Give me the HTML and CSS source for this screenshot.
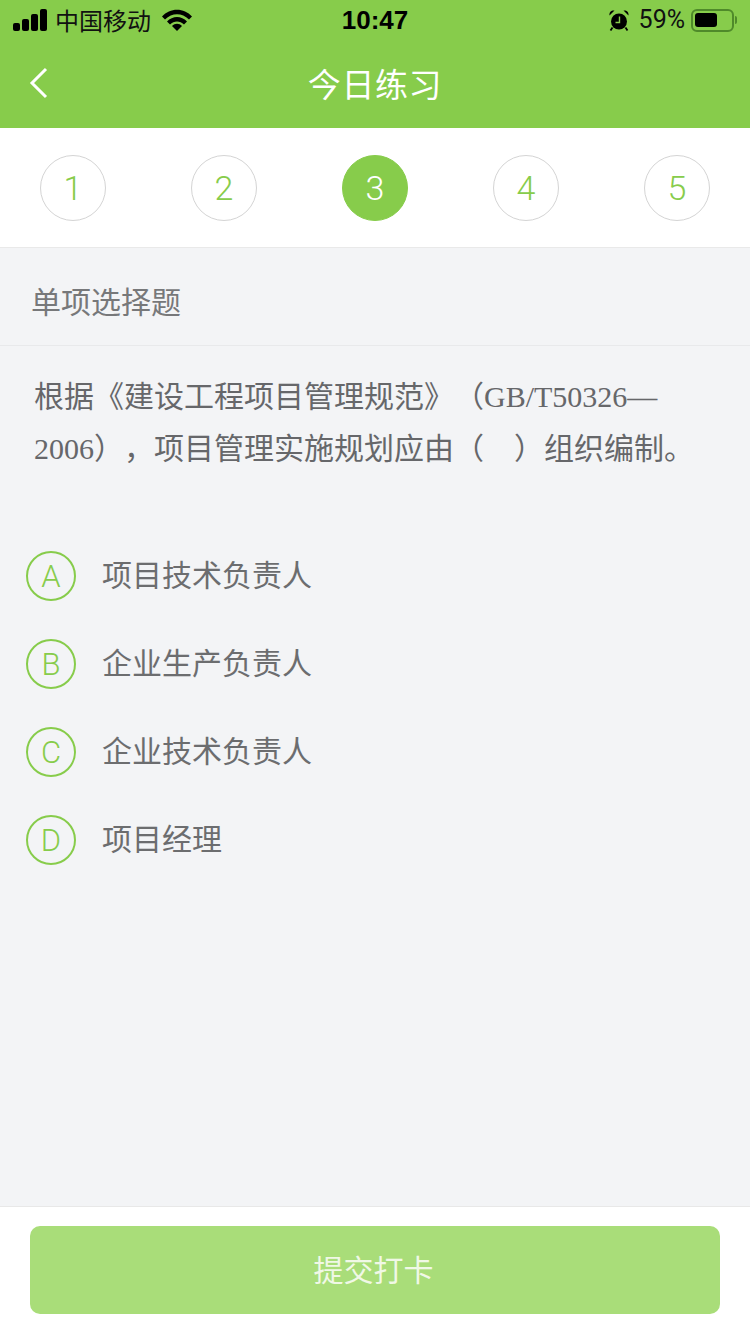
FILE: index.html
```html
<!DOCTYPE html>
<html lang="zh-CN">
<head>
    <meta charset="UTF-8">
    <meta name="viewport" content="width=device-width, initial-scale=1.0">
    <title>今日练习</title>
    <link rel="stylesheet" href="styles.css">
</head>
<body>
    <div class="page">
        <!-- Green header with the status bar -->
        <header class="header">
            <div class="status-bar">
                <div class="status-left">
                    <svg class="signal" width="34" height="22" viewBox="0 0 34 22">
                        <rect x="0" y="14" width="7" height="8" rx="2"/>
                        <rect x="9" y="10" width="7" height="12" rx="2"/>
                        <rect x="18" y="5" width="7" height="17" rx="2"/>
                        <rect x="27" y="0" width="7" height="22" rx="2"/>
                    </svg>
                    <span class="carrier">中国移动</span>
                    <svg class="wifi" width="30" height="22" viewBox="0 0 30 22">
                        <path d="M0 7.500C8 -1.500 22 -1.500 30 7.500L27 10.500C20 3.500 10 3.500 3 10.500Z"/>
                        <path d="M5 12.500C10.500 6.500 19.500 6.500 25 12.500L22 15.500C18 11.500 12 11.500 8 15.500Z"/>
                        <path d="M10 17C13 14 17 14 20 17L15 22Z"/>
                    </svg>
                </div>
                <span class="time">10:47</span>
                <div class="status-right">
                    <svg class="alarm" width="20" height="21" viewBox="0 0 20 21">
                        <circle cx="10" cy="11.500" r="8"/>
                        <path d="M.5 5.500C0 2 2.500 0 5.500 .5ZM19.500 5.500C20 2 17.500 0 14.500 .5Z"/>
                        <path d="M3.500 17.500L1.500 20.500M16.500 17.500L18.500 20.500" stroke="#000" stroke-width="1.800"/>
                        <path d="M10.500 6.500V12.500H6.500" fill="none" stroke="#87cc4b" stroke-width="1.400"/>
                    </svg>
                    <span class="battery-text">59%</span>
                    <div class="battery">
                        <div class="battery-level"></div>
                    </div>
                    <div class="battery-cap"></div>
                </div>
            </div>
            <div class="nav-bar">
                <svg class="back" width="20" height="32" viewBox="0 0 20 32">
                    <path d="M17 2L3 16L17 30" fill="none" stroke="#fff" stroke-width="3"/>
                </svg>
                <h1>今日练习</h1>
            </div>
        </header>

        <!-- Question numbers -->
        <div class="steps">
            <div class="step">1</div>
            <div class="step">2</div>
            <div class="step active">3</div>
            <div class="step">4</div>
            <div class="step">5</div>
        </div>

        <div class="question-type">单项选择题</div>

        <div class="question">根据《建设工程项目管理规范》（<span class="latin">GB/T50326—<br>2006</span>），项目管理实施规划应由（　）组织编制。</div>

        <div class="options">
            <div class="option"><div class="option-letter">A</div><span>项目技术负责人</span></div>
            <div class="option"><div class="option-letter">B</div><span>企业生产负责人</span></div>
            <div class="option"><div class="option-letter">C</div><span>企业技术负责人</span></div>
            <div class="option"><div class="option-letter">D</div><span>项目经理</span></div>
        </div>

        <div class="footer">
            <button class="submit-btn">提交打卡</button>
        </div>
    </div>
</body>
</html>
```

FILE: styles.css
```css
/* Global styles */
* {
    box-sizing: border-box;
}

body {
    margin: 0;
    font-family: 'Noto Sans CJK SC', 'Liberation Sans', sans-serif;
    background-color: #f3f4f6;
    overflow: hidden;
    text-spacing-trim: space-all;
}

.page {
    width: 750px;
    height: 1334px;
    display: flex;
    flex-direction: column;
}

/* Header */
.header {
    height: 128px;
    background-color: #87cc4b;
}

.status-bar {
    height: 40px;
    display: flex;
    justify-content: space-between;
    align-items: center;
    padding: 0 13px 0 13px;
    position: relative;
    color: #000;
}

.status-left,
.status-right {
    display: flex;
    align-items: center;
}

.carrier {
    font-size: 24px;
    line-height: 40px;
    margin-left: 8px;
    color: #111;
}

.wifi {
    margin-left: 11px;
}

.time {
    position: absolute;
    left: 0;
    right: 0;
    text-align: center;
    font-family: 'Liberation Sans', sans-serif;
    font-size: 26px;
    font-weight: bold;
    line-height: 40px;
}

.battery-text {
    font-family: 'Roboto', 'Liberation Sans', sans-serif;
    font-weight: 400;
    font-size: 25px;
    line-height: 40px;
    margin-left: 10px;
    color: #111;
}

.battery {
    width: 43px;
    height: 23px;
    border: 2px solid #4f8a2a;
    border-radius: 6px;
    padding: 2.500px 2px;
    margin-left: 6px;
}

.battery-level {
    width: 22px;
    height: 14px;
    background-color: #000;
    border-radius: 3px;
}

.battery-cap {
    width: 2px;
    height: 8px;
    margin-left: 1px;
    background-color: #4f8a2a;
    border-radius: 0 2px 2px 0;
}

.nav-bar {
    height: 88px;
    display: flex;
    align-items: center;
    justify-content: center;
    position: relative;
}

.back {
    position: absolute;
    left: 29px;
    top: 27px;
}

h1 {
    margin: 0;
    color: #fff;
    font-size: 33px;
    font-weight: 400;
    letter-spacing: 0.600px;
    line-height: 88px;
    position: relative;
    top: -1px;
}

/* Question number row */
.steps {
    height: 120px;
    background-color: #fff;
    border-bottom: 1px solid #e9e9e9;
    padding: 27px 40px 0;
    display: flex;
    justify-content: space-between;
    align-items: flex-start;
}

.step {
    width: 66px;
    height: 66px;
    border-radius: 50%;
    border: 1px solid #d4d4d4;
    color: #87cc4b;
    font-family: 'Roboto', 'Liberation Sans', sans-serif;
    font-weight: 300;
    font-size: 34px;
    display: flex;
    justify-content: center;
    align-items: center;
}

.step.active {
    background-color: #87cc4b;
    border-color: #87cc4b;
    color: #fff;
}

.question-type {
    height: 98px;
    padding: 0 31px;
    line-height: 104px;
    border-bottom: 1px solid #e8e9eb;
    font-size: 30px;
    color: #77787a;
}

.question {
    padding: 22px 30px 0 34px;
    font-size: 30px;
    line-height: 52px;
    color: #66676a;
    height: 184px;
    white-space: nowrap;
}

.latin {
    font-family: 'Liberation Serif', serif;
    line-height: 1;
}

.options {
    padding-left: 26px;
    display: flex;
    flex-direction: column;
    gap: 38px;
    margin-top: 21px;
}

.option {
    display: flex;
    align-items: center;
    height: 50px;
    font-size: 30px;
    color: #6c6d6f;
}

.option span {
    margin-left: 26px;
    position: relative;
    top: -3px;
}

.option-letter {
    width: 50px;
    height: 50px;
    border-radius: 50%;
    border: 2px solid #87cc4b;
    color: #87cc4b;
    font-family: 'Roboto', 'Liberation Sans', sans-serif;
    font-weight: 300;
    font-size: 31px;
    display: flex;
    justify-content: center;
    align-items: center;
}

/* Bottom button */
.footer {
    margin-top: auto;
    height: 128px;
    background-color: #fff;
    border-top: 1px solid #e8e8e8;
    padding: 19px 30px 0;
}

.submit-btn {
    display: block;
    width: 690px;
    height: 88px;
    border: none;
    border-radius: 10px;
    padding: 0 3px 4px 0;
    background-color: #a9dd79;
    color: #f0f8e6;
    font-family: 'Noto Sans CJK SC', sans-serif;
    font-size: 30px;
}
```
